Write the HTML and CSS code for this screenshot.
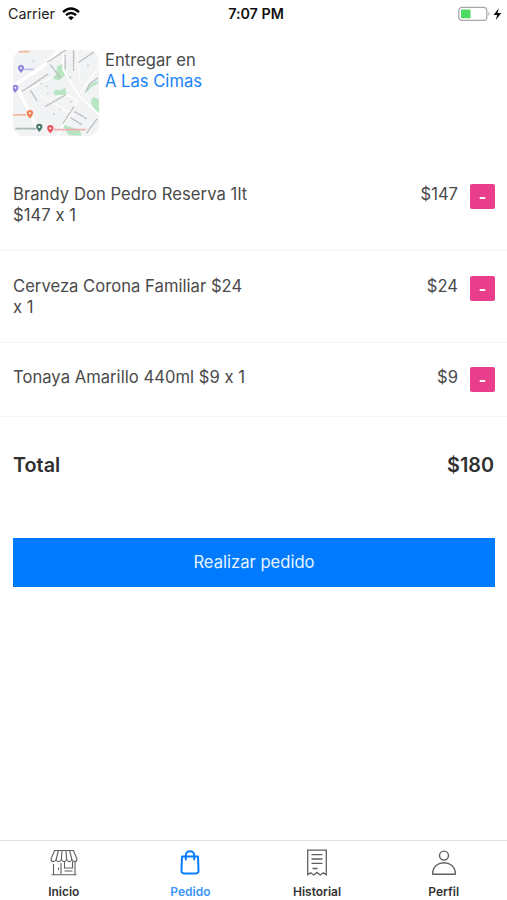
FILE: index.html
```html
<!DOCTYPE html>
<html lang="es">
<head>
<meta charset="utf-8">
<title>Pedido</title>
<link rel="stylesheet" href="styles.css">
</head>
<body>
<div class="app">
  <header class="status">
    <div class="carrier"><span>Carrier</span>
      <svg width="18" height="14" viewBox="0 0 18 14" fill="none" stroke="#000" stroke-width="2.4"><path d="M1 5.2Q9-2.2 17 5.2M3.900 8.200Q9 3.600 14.100 8.200"/><path d="M6.200 10.400Q9 8.100 11.800 10.400L9 13.200Z" fill="#000" stroke="none"/></svg>
    </div>
    <span class="time">7:07 PM</span>
    <svg class="battery" width="44" height="16" viewBox="0 0 44 16"><rect x=".8" y="1.400" width="28" height="13" rx="3.200" fill="#fff" stroke="#a8a8a8" stroke-width="1.300"/><rect x="3" y="3.600" width="9.500" height="8.600" rx="1" fill="#4cd964"/><path d="M30.500 5.800q2.400 2.100 0 4.200z" fill="#a8a8a8"/><path d="M40.800 2.200 35.500 9h3.600l-1.200 5 5.400-7h-3.700z" fill="#111"/></svg>
  </header>

  <section class="deliver">
    <svg class="map" viewBox="40 30 257 257">
      <rect x="40" y="30" width="257" height="257" fill="#f2f3f4"/>
      <g fill="#b9e6c2"><path d="M172 78l19-6 4 34-19 16-19-8 12-10z"/><path d="M160 153l14-6 5 4 17-9 4 19-22 11-14-8z"/><path d="M254 155l18-22 22-12v8l-20 12-16 17z"/><path d="M272 188l7-18 18 8v41l-12-8z"/><path d="M187 252l54 18 3 16-38-1z"/></g>
      <g fill="none" stroke="#fff"><path stroke-width="10" d="M40 138 128 80 180 30"/><path stroke-width="9" d="M56 150l60 120"/><path stroke-width="5" d="M190 30v60l50 80 57 52M170 168l38-2 24 16-60 104"/><path stroke-width="3" d="M60 160l100-50M230 30l10 90M120 165l100 60M297 80l-65 90"/></g>
      <g fill="none" stroke="#b4b6b9" stroke-width="4" stroke-dasharray="5 1"><path d="M142 67l57-38M67 154l78-52M92 150l20 32M136 199l61-35M190 249l33-51M224 214l37 22M213 233l33 20M260 278l32-43M236 67l46-31M196 44v43M221 31v62M152 74l30 40M260 151l8-18 26-20"/></g>
      <g fill="#c4c9cb"><circle cx="125" cy="130" r="2.500"/><circle cx="141" cy="138" r="2.500"/><circle cx="144" cy="160" r="2.500"/><circle cx="181" cy="207" r="2.500"/><circle cx="163" cy="221" r="2.500"/><circle cx="213" cy="185" r="2.500"/><circle cx="264" cy="76" r="2.500"/><circle cx="101" cy="64" r="2.500"/><circle cx="211" cy="112" r="2.500"/></g>
      <g stroke-width="5" fill="none" stroke-dasharray="7 1"><path d="M56 35h34M40 224h40" stroke="#f3b294"/><path d="M74 88h28" stroke="#b8b5e4"/><path d="M47 265h61" stroke="#a3b2ae"/><path d="M162 268h96" stroke="#efa6ac"/></g>
      <g><path d="M55 84a9 9 0 0 1 18 0q0 6-9 15-9-9-9-15" fill="#8b83dc"/><path d="M38 143a9 9 0 0 1 18 0q0 6-9 15-9-9-9-15" fill="#8b83dc"/><path d="M81 219a9.500 9.500 0 0 1 19 0q0 6-9.500 16-9.500-10-9.500-16" fill="#ee8250"/><path d="M109 260a9.500 9.500 0 0 1 19 0q0 6-9.500 15-9.500-9-9.500-15" fill="#4b7c6f"/><path d="M142 264a9.500 9.500 0 0 1 19 0q0 6-9.500 15-9.500-9-9.500-15" fill="#eb5660"/></g>
      <g fill="#fff"><circle cx="64" cy="84" r="3"/><circle cx="47" cy="143" r="3"/><circle cx="90.500" cy="219" r="3"/><circle cx="118.500" cy="260" r="3"/><circle cx="151.500" cy="264" r="3"/></g>
    </svg>
    <div class="place"><div>Entregar en</div><a>A Las Cimas</a></div>
  </section>

  <main>
    <div class="item two"><p class="wide">Brandy Don Pedro Reserva 1lt $147 x 1</p><span>$147</span><button aria-label="Quitar">-</button></div>
    <div class="item two second"><p>Cerveza Corona Familiar $24 x&nbsp;1</p><span>$24</span><button aria-label="Quitar">-</button></div>
    <div class="item third"><p>Tonaya Amarillo 440ml $9 x 1</p><span>$9</span><button aria-label="Quitar">-</button></div>
    <div class="total"><span>Total</span><span>$180</span></div>
    <button class="order">Realizar pedido</button>
  </main>

  <nav class="tabs">
    <div class="tab">
      <svg width="28" height="28" viewBox="0 0 28 28" fill="none" stroke="#606060" stroke-width="1.100"><path d="M4.500 1.500h19l3.500 8.500c0 3.500-4.500 3.500-5.200 0-.7 3.500-4.500 3.500-5.200 0-.7 3.500-4.500 3.500-5.200 0-.7 3.500-4.500 3.500-5.200 0C5.500 13.500 1 13.500 1 10zM8.500 1.500 6.200 10M12 1.500 11.400 10M16 1.500l.6 8.500M19.500 1.500l2.300 8.500M3.500 15v10.500M25 13v12.500M1.500 25.700h25M11 25V14M8.500 18.500v2.500M14.500 12.500v6.500h8v-6.500M14.500 22h8"/></svg>
      <span>Inicio</span></div>
    <div class="tab active">
      <svg width="28" height="28" viewBox="0 0 28 28" fill="none" stroke="#087cff" stroke-width="2" stroke-linejoin="round" stroke-linecap="round"><path d="M6 7.500h16l.5 14q.1 2.900-2.500 2.900H8q-2.600 0-2.500-2.900zM9.800 10.500V6.500C9.800.9 18.200.9 18.200 6.500v4"/></svg>
      <span>Pedido</span></div>
    <div class="tab">
      <svg width="28" height="28" viewBox="0 0 28 28" fill="none" stroke="#606060" stroke-width="1.300"><path d="M4.700 1.200h18.600v24.500l-3-2-3.100 2.300-3.200-2.600-3.200 2.600-3.100-2.300-3 2zM8.500 5.700h11M8.500 10h11M8.500 14.300h11M9.500 19.500h5"/></svg>
      <span>Historial</span></div>
    <div class="tab">
      <svg width="28" height="28" viewBox="0 0 28 28" fill="none" stroke="#606060" stroke-width="1.400"><circle cx="14" cy="6.600" r="4.500"/><path d="M2.700 25.300V24C3.500 10.300 24.500 10.300 25.300 24v1.300z" stroke-linejoin="round"/></svg>
      <span>Perfil</span></div>
  </nav>
</div>
</body>
</html>
```
FILE: styles.css
```css
* { box-sizing: border-box; }
body { margin: 0; background: #fff; color: #4a4a4a; font: 16.6px/21px Inter, "Liberation Sans", sans-serif; font-feature-settings: "calt" 0; }
button { border: 0; padding: 0; font: inherit; font-feature-settings: inherit; }
.app { height: 900px; display: flex; flex-direction: column; }
.status { height: 27px; flex: none; display: grid; grid-template-columns: 1fr auto 1fr; align-items: center; padding: 0 5px 0 8px; font-size: 14.3px; color: #222; }
.carrier { display: flex; align-items: center; gap: 7px; }
.time { font-weight: 600; margin-left: 2px; color: #111; }
.battery { justify-self: end; }
.deliver { display: flex; gap: 6px; padding: 23px 13px 0; height: 138px; flex: none; }
.map { width: 86px; height: 86px; border-radius: 11px; }
.place a { color: #1683f8; }
main { flex: 1; }
.item { display: flex; align-items: flex-start; height: 74px; padding: 25px 12px 0 13px; border-bottom: 1px solid #f5f5f5; }
.two { height: 86px; padding-top: 19px; }
.second { height: 92px; padding-top: 25px; }
.third { padding-top: 24px; }
.item p { margin: 0; width: 245px; letter-spacing: .03px; }
.item .wide { letter-spacing: .06px; }
.item span { margin-left: auto; margin-right: 12px; }
.item button { width: 25px; height: 25px; border-radius: 2px; background: #e83e8c; color: #fff; font-weight: 700; font-size: 16px; line-height: 24px; }
.total { display: flex; justify-content: space-between; padding: 37px 13px 0; color: #303030; font-weight: 600; font-size: 19.8px; line-height: 22px; }
.order { display: block; margin: 62px 12px 0 13px; width: calc(100% - 25px); height: 49px; background: #007bff; color: #e6f3ff; }
.tabs { height: 60px; flex: none; border-top: 1px solid #dedede; display: grid; grid-template-columns: repeat(4, 1fr); padding-left: .5px; }
.tab { display: flex; flex-direction: column; align-items: center; padding-top: 8px; color: #333; font-size: 12px; line-height: 16px; font-weight: 600; gap: 7px; }
.active { color: #3b96fb; }
```
